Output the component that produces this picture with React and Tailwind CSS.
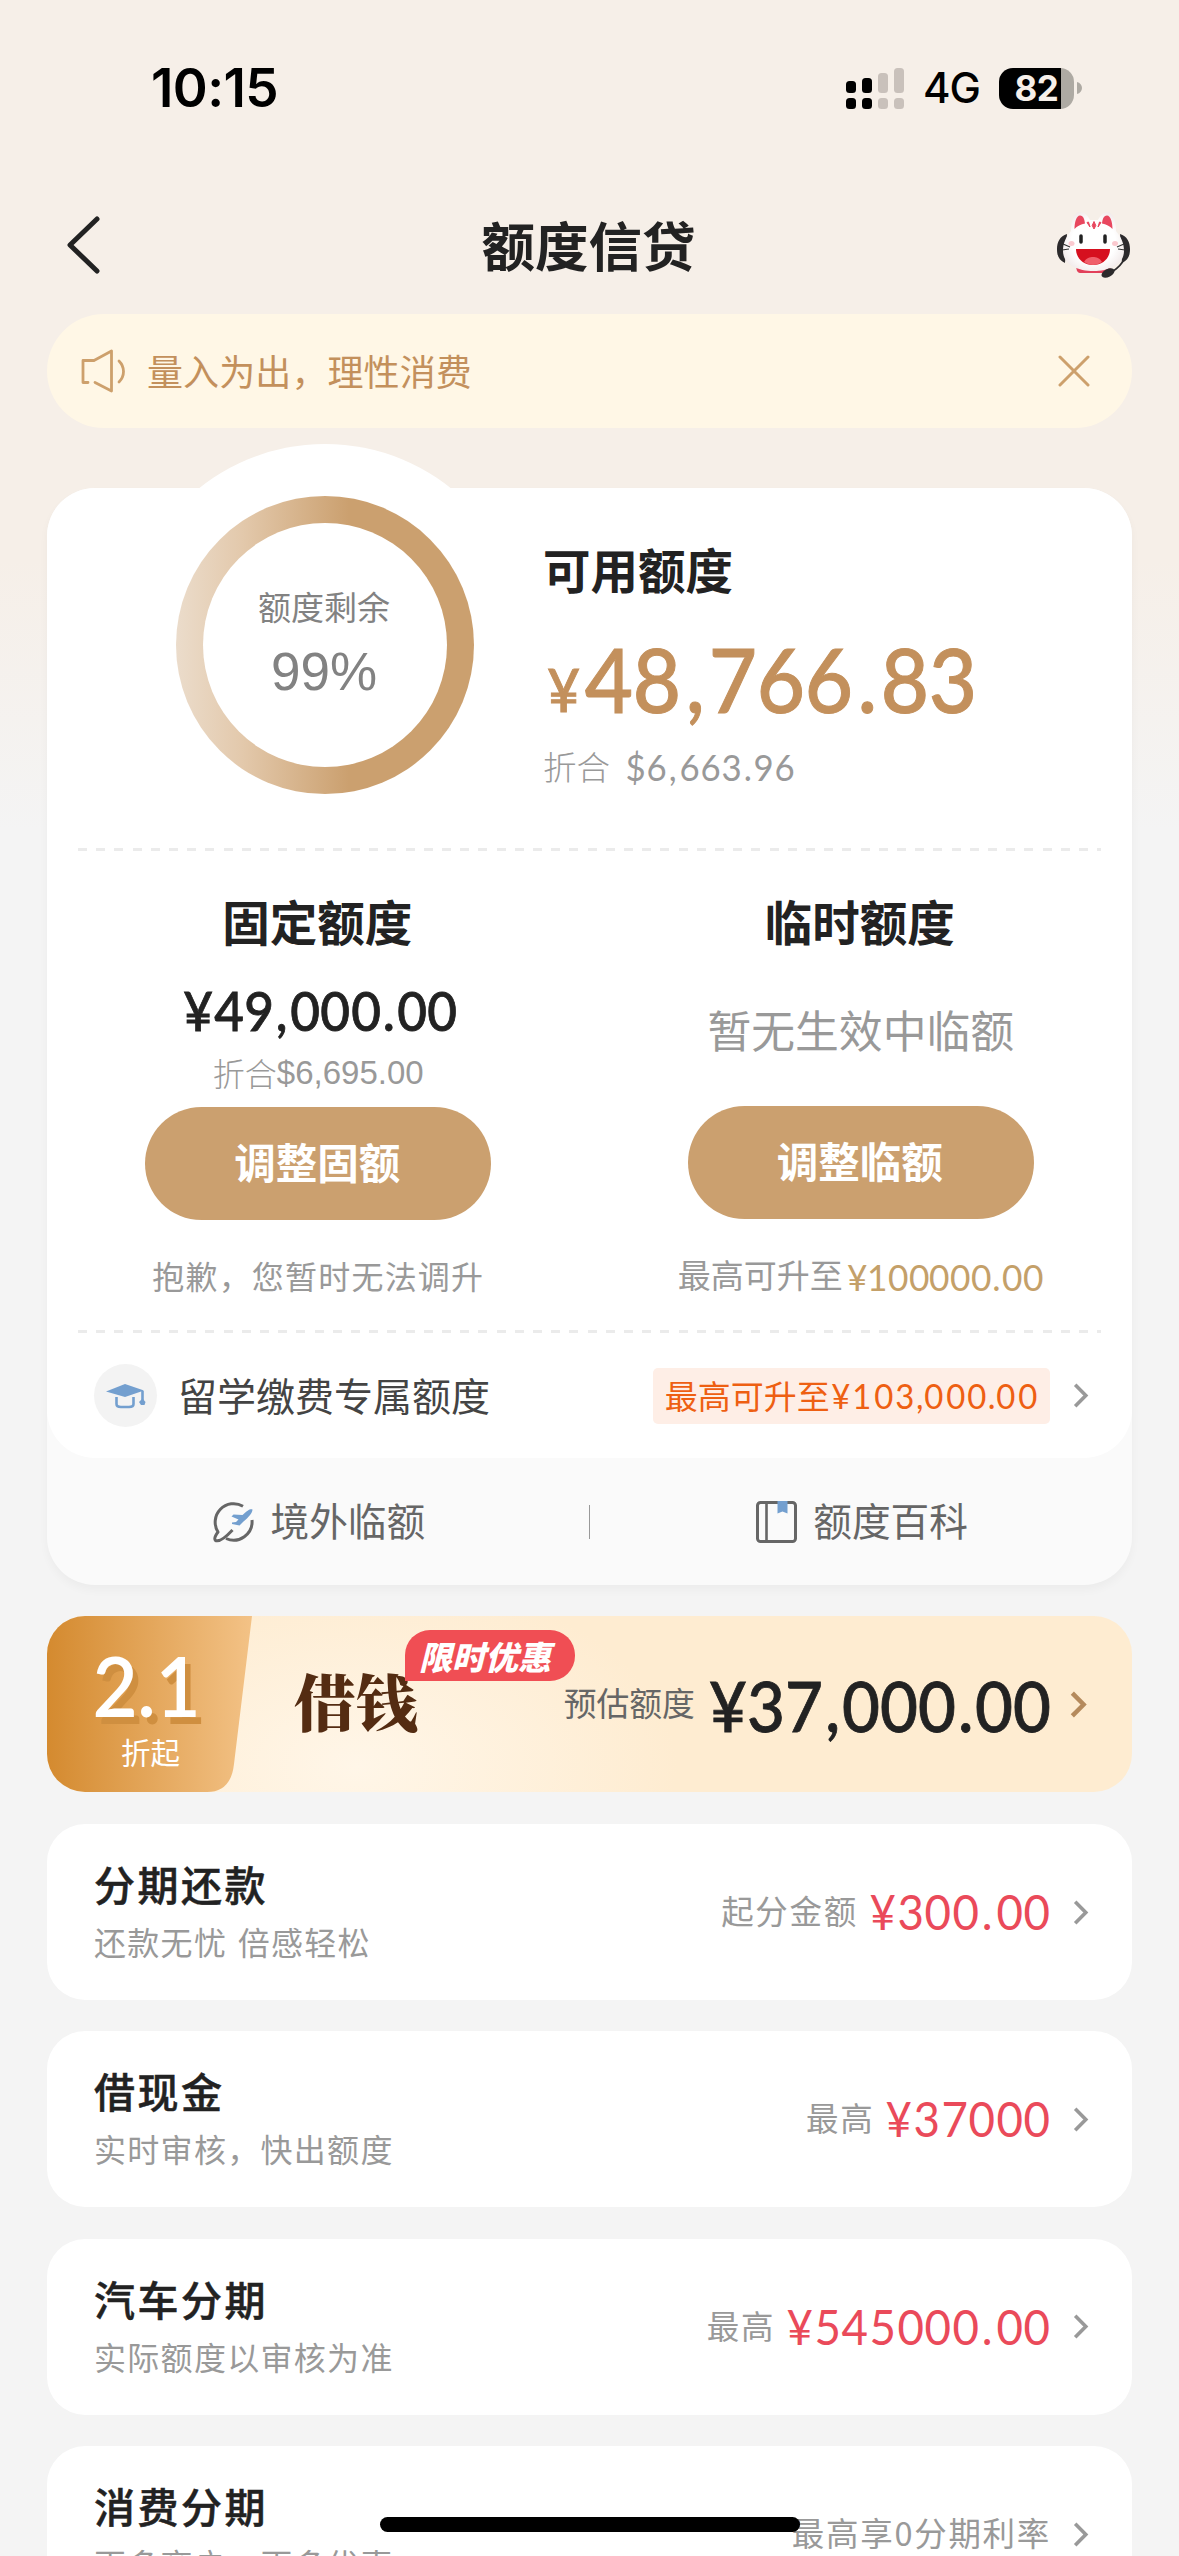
import React from "react";

function Money({ text, digit, punct, className = "" }) {
  return (
    <span className={`inline-flex whitespace-pre font-['Lato','Noto_Sans_CJK_SC',sans-serif] ${className}`}>
      {text.split("").map((ch, i) => (
        <span key={i} className="flex scale-x-[0.94] justify-center" style={{ width: ch === "," || ch === "." ? punct : digit }}>
          {ch}
        </span>
      ))}
    </span>
  );
}

function Chevron({ color = "#999999", className = "h-[25px] w-[16px]", stroke = 3.6 }) {
  return (
    <svg viewBox="0 0 16 25" className={className} fill="none" stroke={color} strokeWidth={stroke}>
      <path d="M2.2 1.800 12.800 12.500 2.200 23.200" />
    </svg>
  );
}

function StatusBar() {
  return (
    <div className="flex h-[176px] shrink-0 items-center justify-between pl-[151px] pr-[97px] font-['Inter',sans-serif] text-black">
      <div className="text-[53px] font-semibold leading-[60px] tracking-[-0.6px]">10:15</div>
      <div className="flex items-center">
        <svg viewBox="0 0 58 41" className="h-[41px] w-[58px]">
          <rect x="0" y="13" width="10" height="12" rx="3.5" />
          <rect x="16" y="10" width="10" height="15" rx="3.5" />
          <rect x="32" y="5" width="10" height="20" rx="3.5" fill="#c9c1bb" />
          <rect x="48" y="0" width="10" height="25" rx="3.5" fill="#c9c1bb" />
          <rect x="0" y="30" width="10" height="11" rx="3.5" />
          <rect x="16" y="30" width="10" height="11" rx="3.5" />
          <rect x="32" y="30" width="10" height="11" rx="3.5" fill="#c9c1bb" />
          <rect x="48" y="30" width="10" height="11" rx="3.5" fill="#c9c1bb" />
        </svg>
        <span className="ml-[19px] w-[56px] text-[42px] font-medium leading-[50px] tracking-[-1px]">4G</span>
        <div className="ml-[20px] flex h-[41px] w-[75px] items-center justify-center overflow-hidden rounded-[14px] bg-[linear-gradient(to_right,#000_62px,#aeaaa3_62px)] text-[35px] font-bold leading-[41px] text-[#f6efe9]">
          <span className="tracking-[-0.5px]">82</span>
        </div>
        <svg viewBox="0 0 5 12" className="ml-[3px] h-[12px] w-[5px]" fill="#aeaaa3">
          <path d="M0 0c3 .8 5 3 5 6s-2 5.200-5 6z" />
        </svg>
      </div>
    </div>
  );
}

function Mascot() {
  return (
    <svg viewBox="0 0 73 67" className="h-[67px] w-[73px]">
      <defs>
        <radialGradient id="face" cx="0.5" cy="0.5" r="0.6">
          <stop offset="0.6" stopColor="#ffffff" />
          <stop offset="1" stopColor="#efe6e6" />
        </radialGradient>
      </defs>
      <path d="M10 22C3 24 0 30 0 37s2 11 8 14zM63 22c7 2 10 8 10 15s-2 11-8 14z" fill="#2c2a2c" />
      <path d="M19 52h36l-3 9H23c-3 0-4-4-4-9z" fill="#e2405a" />
      <path d="M14 19C14 8 17 0 23 0c5 0 8 4 10 8h8c2-4 5-8 9-8 6 0 9 8 9 19 5 6 8 12 8 20 0 13-14 20-30.500 20S6 52 6 39c0-8 3-14 8-20z" fill="url(#face)" />
      <path d="M17.500 17c0-7 2-13.500 5.500-13.500s4.500 4 5 8c-4 1-8 2.500-10.500 5.500zM55.500 17c0-7-2-13.500-5.500-13.500s-4.500 4-5 8c4 1 8 2.500 10.500 5.500z" fill="#e8475f" />
      <path d="M30 10.500l3 4.500-1.500-5zM44 10.500l-3 4.500 1.500-5zM37 9.500l1.800 4-1.800 3.500-1.800-3.500z" fill="#e8475f" stroke="#e8475f" strokeWidth="1" />
      <path d="M24 24v6M48 24v6" stroke="#222" strokeWidth="3.500" strokeLinecap="round" />
      <ellipse cx="14.500" cy="31.500" rx="3" ry="2.500" fill="#fbc9cf" />
      <ellipse cx="58" cy="31.500" rx="3" ry="2.500" fill="#fbc9cf" />
      <path d="M6 32l7 3M5 38l7-1M67 32l-7 3M68 38l-7-1" stroke="#333" strokeWidth="1.200" />
      <path d="M19 37h34c0 9-7 16-17 16s-17-7-17-16z" fill="#d6101f" />
      <path d="M27 50c2-4 6-5 9-5s7 1 9 5c-3 2-6 3-9 3s-6-1-9-3z" fill="#f0606c" />
      <path d="M67 47c-2 5-6 9-12 13" stroke="#2c2a2c" strokeWidth="1.800" fill="none" />
      <ellipse cx="51" cy="61" rx="7" ry="4" transform="rotate(-28 51 61)" fill="#2c2a2c" />
    </svg>
  );
}

function NavBar() {
  return (
    <div className="flex h-[138px] shrink-0 items-center justify-between pl-[66px] pr-[49px]">
      <div className="w-[73px]">
        <svg viewBox="0 0 34 58" className="h-[58px] w-[34px]" fill="none" stroke="#222" strokeWidth="5" strokeLinecap="round" strokeLinejoin="round">
          <path d="M31 3 4 29l27 26" />
        </svg>
      </div>
      <h1 className="ml-[-19px] mt-[-3px] text-[53.500px] font-bold leading-[70px] text-[#222]">额度信贷</h1>
      <Mascot />
    </div>
  );
}

function Notice() {
  return (
    <div className="mx-[47px] flex h-[114px] shrink-0 items-center rounded-full bg-[#fff7e6] pl-[34px] pr-[42px] text-[#c3905c]">
      <svg viewBox="0 0 46 44" className="h-[44px] w-[46px]" fill="none" stroke="#cda06c" strokeWidth="2.800" strokeLinecap="round" strokeLinejoin="round">
        <path d="M7 33.500H2V11.500H13L30.500 2V42L14 33.500" />
        <path d="M38 12c6 6 6 15 0 21" />
      </svg>
      <span className="ml-[20px] mt-[-3px] flex-1 text-[36px] leading-[50px] tracking-[0.1px]">量入为出，理性消费</span>
      <svg viewBox="0 0 32 32" className="h-[32px] w-[32px]" fill="none" stroke="#cda06c" strokeWidth="3" strokeLinecap="round">
        <path d="M2 2l28 28M30 2 2 30" />
      </svg>
    </div>
  );
}

function Dashes() {
  return <div className="mx-[31px] h-[3px] bg-[repeating-linear-gradient(to_right,#ebebeb_0_9px,transparent_9px_18.2px)]" />;
}

function AmountSummary() {
  return (
    <div className="relative flex h-[360px] pl-[129px]">
      <div className="mt-[8px] h-[298px] w-[298px] rounded-full bg-[linear-gradient(to_right,#ebdccb_0%,#e3c9ac_22%,#cba06f_58%)] p-[27px]">
        <div className="flex h-full w-full flex-col items-center rounded-full bg-white pr-[2px] pt-[63px] text-[#828282]">
          <span className="text-[33px] leading-[40px]">额度剩余</span>
          <span className="mt-[18px] font-['Liberation_Sans',sans-serif] text-[53px] leading-[56px]">99%</span>
        </div>
      </div>
      <div className="ml-[69px] pt-[51px]">
        <h2 className="text-[47.500px] font-bold leading-[60px] text-[#222]">可用额度</h2>
        <div className="mt-[30px] flex h-[100px] text-[#c3905c] [-webkit-text-stroke:1px_#c3905c]">
          <Money text="¥" digit={41} punct={20} className="mt-[10px] text-[60px] font-medium leading-[100px]" />
          <Money text="48,766.83" digit={47.900} punct={28.500} className="ml-[1px] text-[88.500px] font-medium leading-[100px]" />
        </div>
        <div className="mt-[17px] flex text-[33.500px] font-light leading-[40px] text-[#999]">
          <span>折合</span>
          <Money text="$6,663.96" digit={21} punct={11.500} className="ml-[15px] mt-[1px] text-[37px] font-normal" />
        </div>
      </div>
    </div>
  );
}

function PillButton({ children, className }) {
  return (
    <button className={`h-[113px] w-[346px] rounded-full bg-[#cba06f] pb-[5px] pr-[2px] text-[41.500px] font-bold leading-[50px] text-white ${className}`}>
      {children}
    </button>
  );
}

function LimitColumns() {
  return (
    <div className="grid h-[479px] grid-cols-2 pt-[40px]">
      <div className="flex flex-col items-center">
        <h2 className="mr-[2px] text-[47.500px] font-bold leading-[60px] text-[#222]">固定额度</h2>
        <Money text="¥49,000.00" digit={30.400} punct={15.500} className="mt-[29px] ml-[4px] text-[54.500px] font-medium leading-[60px] text-[#222] [-webkit-text-stroke:0.800px_#222]" />
        <div className="mt-[12px] flex text-[32px] font-light leading-[40px] text-[#999]">
          折合<span className="mt-[1px] font-['Liberation_Sans',sans-serif] text-[33px]">$6,695.00</span>
        </div>
        <PillButton className="mt-[14px]">调整固额</PillButton>
        <p className="mt-[35px] text-[32px] leading-[40px] tracking-[1.200px] text-[#999]">抱歉，您暂时无法调升</p>
      </div>
      <div className="flex flex-col items-center">
        <h2 className="mr-[2px] text-[47.500px] font-bold leading-[60px] text-[#222]">临时额度</h2>
        <p className="mt-[48px] text-[43.800px] leading-[60px] text-[#999]">暂无生效中临额</p>
        <PillButton className="mt-[47px]">调整临额</PillButton>
        <p className="mt-[35px] flex text-[33px] leading-[40px] text-[#999]">
          最高可升至
          <Money text="¥100000.00" digit={20.700} punct={11} className="ml-[4px] mt-[3px] text-[37.500px] text-[#c4a069]" />
        </p>
      </div>
    </div>
  );
}

function StudyRow() {
  return (
    <div className="flex h-[125px] items-center pl-[47px] pr-[43px]">
      <div className="flex h-[63px] w-[63px] items-center justify-center rounded-full bg-[#f3f3f3]">
        <svg viewBox="0 0 40 26" className="h-[26px] w-[40px]">
          <path d="M0 8.500 19 1l19 6.500-19 6.500z" fill="#739fcf" />
          <path d="M10.500 14v7c0 2 2 3 4.500 3h8c2.500 0 4.500-1 4.500-3v-7M36.500 8v10" fill="none" stroke="#739fcf" strokeWidth="2.600" />
          <path d="M36.500 15.500l3 3.500-1 3h-3.500l-2-3z" fill="#739fcf" />
        </svg>
      </div>
      <span className="ml-[21px] mt-[-4px] text-[39px] leading-[50px] text-[#444]">留学缴费专属额度</span>
      <div className="ml-auto flex h-[56px] w-[397px] items-center justify-center rounded-[5px] bg-[#feeee6] pb-[2px] text-[33px] leading-[40px] text-[#ee5f12]">
        <span>最高可升至</span>
        <Money text="¥103,000.00" digit={21.500} punct={7.500} className="text-[35px]" />
      </div>
      <Chevron className="ml-[23px] h-[25px] w-[16px]" />
    </div>
  );
}

function PlaneIcon() {
  return (
    <svg viewBox="0 0 42 42" className="h-[42px] w-[42px]" fill="none">
      <path d="M30 5.200A18.500 18.500 0 0 0 5 31C2 35 1 38 2.500 39.500 6 41 13 36 19.500 29" stroke="#666" strokeWidth="3" strokeLinejoin="round" />
      <path d="M13 37.500A18.500 18.500 0 0 0 39 19" stroke="#666" strokeWidth="3" />
      <path d="M39.500 8.500c-2-1-5 .5-10 5.500l-9-.500-2 2 7 3-2.500 2.500-4 .500v1.500l7.500 1.500 4-4c5-4 9-8.500 9-12z" fill="#739fcf" />
    </svg>
  );
}

function BookIcon() {
  return (
    <svg viewBox="0 0 41 42" className="h-[42px] w-[41px]" fill="none">
      <rect x="1.500" y="1.500" width="38" height="39" rx="3" stroke="#666" strokeWidth="3" />
      <path d="M10.500 2v38" stroke="#666" strokeWidth="2.600" />
      <path d="M21.500 0h10v12.500l-5-2-5 2z" fill="#739fcf" />
    </svg>
  );
}

function QuickLinks() {
  return (
    <div className="flex h-[127px] items-center text-[38.700px] leading-[50px] text-[#666]">
      <div className="flex flex-1 items-center justify-center gap-[16px] pl-[2px]">
        <PlaneIcon />
        <span className="mt-[-6px]">境外临额</span>
      </div>
      <div className="h-[34px] w-[1.500px] bg-[#999]" />
      <div className="flex flex-1 items-center justify-center gap-[16px] pl-[2px]">
        <BookIcon />
        <span className="mt-[-6px]">额度百科</span>
      </div>
    </div>
  );
}

function LimitCard() {
  return (
    <section className="relative mx-[47px] mt-[60px] shrink-0 rounded-[48px] bg-[#fafafa] shadow-[0_5px_10px_rgba(0,0,0,0.035)]">
      <div className="absolute left-[77px] top-[-44px] h-[402px] w-[402px] rounded-full bg-white" />
      <div className="relative rounded-[48px] bg-white">
        <AmountSummary />
        <Dashes />
        <LimitColumns />
        <Dashes />
        <StudyRow />
      </div>
      <QuickLinks />
    </section>
  );
}

function LoanBanner() {
  return (
    <section className="relative mx-[47px] mt-[31px] flex h-[176px] shrink-0 overflow-hidden rounded-[38px] bg-[radial-gradient(ellipse_320px_190px_at_310px_150px,#fff6e8,#feecd1)]">
      <svg viewBox="0 0 205 176" className="absolute left-0 top-0 h-[176px] w-[205px]">
        <defs>
          <linearGradient id="gold">
            <stop offset="0" stopColor="#d48a2f" />
            <stop offset="1" stopColor="#f3c286" />
          </linearGradient>
        </defs>
        <path d="M0 0H205L187 148Q184 176 160 176H0z" fill="url(#gold)" />
      </svg>
      <div className="relative w-[205px] text-white">
        <Money text="2.1" digit={42} punct={21} className="ml-[47px] mt-[27px] text-[83px] font-semibold leading-[84px] [text-shadow:6px_7px_0_#cf8f40]" />
        <div className="ml-[74px] mt-[4px] text-[29.500px] leading-[40px]">折起</div>
      </div>
      <h3 className="ml-[42px] mt-[43px] font-['Noto_Serif_CJK_SC','Noto_Sans_CJK_SC',serif] text-[62px] font-black leading-[84px] text-[#542c12]">借钱</h3>
      <div className="absolute left-[358px] top-[14px] flex h-[51px] w-[170px] items-center justify-center rounded-[25px] rounded-bl-none bg-[#f04e54] pr-[10px] text-[33px] font-black italic leading-[40px] text-white">
        限时优惠
      </div>
      <div className="ml-auto flex items-center pr-[45px] pt-[2px]">
        <span className="mt-[-6px] text-[32.800px] leading-[50px] text-[#666]">预估额度</span>
        <Money text="¥37,000.00" digit={37.900} punct={19.500} className="mb-[1px] ml-[14px] text-[69.500px] font-medium leading-[80px] text-[#222] [-webkit-text-stroke:0.800px_#222]" />
        <Chevron color="#b58a5c" className="mb-[2px] ml-[19px] h-[27px] w-[17px]" stroke={4.2} />
      </div>
    </section>
  );
}

const products = [
  { title: "分期还款", note: "还款无忧 倍感轻松", label: "起分金额", amount: "¥300.00" },
  { title: "借现金", note: "实时审核，快出额度", label: "最高", amount: "¥37000" },
  { title: "汽车分期", note: "实际额度以审核为准", label: "最高", amount: "¥545000.00" },
  { title: "消费分期", note: "更多商户，更多优惠", label: "最高享0分期利率" },
];

function ProductCard({ title, note, label, amount }) {
  return (
    <section className="flex h-[176px] shrink-0 items-center justify-between rounded-[38px] bg-white pl-[47px] pr-[43px]">
      <div className="self-start pt-[31px]">
        <h3 className="text-[41px] font-medium leading-[56px] tracking-[2.500px] text-[#222] [-webkit-text-stroke:0.500px_#222]">{title}</h3>
        <p className="mt-[9px] text-[32px] leading-[42px] tracking-[1.300px] text-[#999] [word-spacing:2px]">{note}</p>
      </div>
      <div className="flex items-center text-[#999]">
        <span className="mt-[-4px] text-[32.500px] leading-[50px] tracking-[1.700px]">{label}</span>
        {amount && (
          <Money text={amount} digit={27.600} punct={16.500} className="mb-[2px] ml-[11px] text-[48.500px] leading-[56px] text-[#ea4a5a]" />
        )}
        <Chevron className="ml-[22px] h-[25px] w-[16px]" />
      </div>
    </section>
  );
}

export default function App() {
  return (
    <main className="relative flex h-[2556px] w-[1179px] flex-col overflow-hidden bg-[#f4f4f4] bg-[linear-gradient(to_bottom,#f6efe8_0px,#f6efe8_560px,#f4f4f4_830px)] font-['Noto_Sans_CJK_SC',sans-serif]">
      <StatusBar />
      <NavBar />
      <Notice />
      <LimitCard />
      <LoanBanner />
      <div className="mx-[47px] mt-[32px] flex shrink-0 flex-col gap-[31.400px]">
        {products.map((p) => (
          <ProductCard key={p.title} {...p} />
        ))}
      </div>
      <div className="absolute left-[380px] top-[2517px] h-[15px] w-[420px] rounded-full bg-black" />
    </main>
  );
}
